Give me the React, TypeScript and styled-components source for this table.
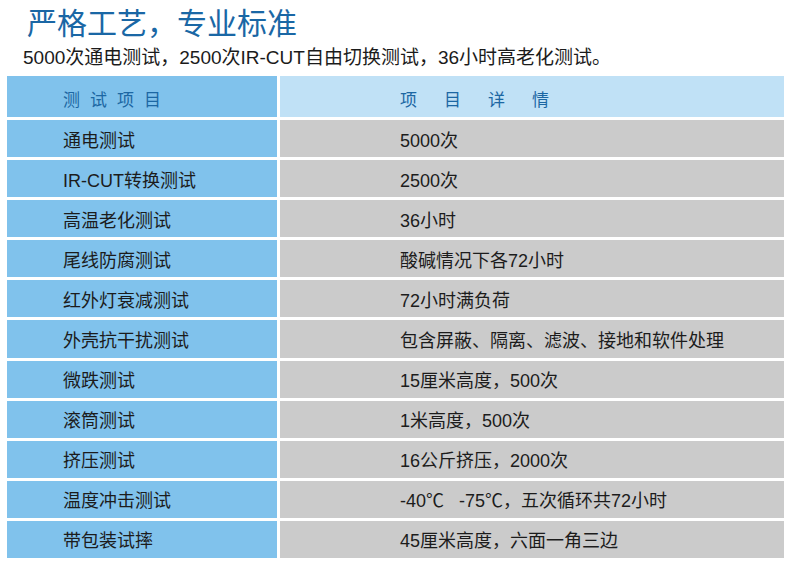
import React from "react";
import styled, { createGlobalStyle } from "styled-components";

const Global = createGlobalStyle`
  html, body { margin: 0; padding: 0; background: #ffffff; }
  body { font-family: "Liberation Sans", "Noto Sans CJK SC", sans-serif; }
`;

const Page = styled.div`
  width: 790px;
  height: 573px;
  box-sizing: border-box;
  padding: 6px 6px 0 7px;
  display: flex;
  flex-direction: column;
  background: #ffffff;
`;

const Title = styled.h1`
  margin: 0 0 0 20px;
  font-size: 30px;
  line-height: 36px;
  font-weight: 400;
  color: #1a67a5;
  font-family: "Liberation Sans", "Noto Sans CJK SC", sans-serif;
`;

const Subtitle = styled.p`
  margin: 4px 0 0 16px;
  font-size: 19px;
  line-height: 24px;
  color: #1b1b1b;
  white-space: nowrap;
`;

const Table = styled.div`
  margin-top: 6px;
  display: grid;
  grid-template-columns: 270px 504px;
  grid-auto-rows: 37.1px;
  grid-template-rows: 41px;
  column-gap: 3px;
  row-gap: 3px;
`;

type Kind = "label" | "headLabel" | "headValue" | "value";

const bg: Record<Kind, string> = {
  label: "#80c2ec",
  headLabel: "#80c2ec",
  headValue: "#c0e1f6",
  value: "#cbcbcb",
};

const Cell = styled.div<{ $kind: Kind }>`
  display: flex;
  align-items: center;
  box-sizing: border-box;
  background: ${(p) => bg[p.$kind]};
  padding-left: ${(p) =>
    p.$kind === "label" || p.$kind === "headLabel" ? "56px" : "120px"};
  font-size: ${(p) => (p.$kind === "headLabel" || p.$kind === "headValue" ? "17px" : "18px")};
  color: ${(p) => (p.$kind === "headLabel" || p.$kind === "headValue" ? "#1c67a3" : "#1c1c1c")};
  letter-spacing: ${(p) =>
    p.$kind === "headLabel" ? "10px" : p.$kind === "headValue" ? "27px" : "0"};
  padding-top: ${(p) => (p.$kind === "headLabel" || p.$kind === "headValue" ? "4px" : "0")};
  white-space: pre;
`;

const rows: [string, string][] = [
  ["通电测试", "5000次"],
  ["IR-CUT转换测试", "2500次"],
  ["高温老化测试", "36小时"],
  ["尾线防腐测试", "酸碱情况下各72小时"],
  ["红外灯衰减测试", "72小时满负荷"],
  ["外壳抗干扰测试", "包含屏蔽、隔离、滤波、接地和软件处理"],
  ["微跌测试", "15厘米高度，500次"],
  ["滚筒测试", "1米高度，500次"],
  ["挤压测试", "16公斤挤压，2000次"],
  ["温度冲击测试", "-40℃   -75℃，五次循环共72小时"],
  ["带包装试摔", "45厘米高度，六面一角三边"],
];

export default function App() {
  return (
    <>
      <Global />
      <Page>
        <Title>严格工艺，专业标准</Title>
        <Subtitle>5000次通电测试，2500次IR-CUT自由切换测试，36小时高老化测试。</Subtitle>
        <Table>
          <Cell $kind="headLabel">测试项目</Cell>
          <Cell $kind="headValue">项目详情</Cell>
          {rows.map(([a, b]) => (
            <React.Fragment key={a}>
              <Cell $kind="label">{a}</Cell>
              <Cell $kind="value">{b}</Cell>
            </React.Fragment>
          ))}
        </Table>
      </Page>
    </>
  );
}
